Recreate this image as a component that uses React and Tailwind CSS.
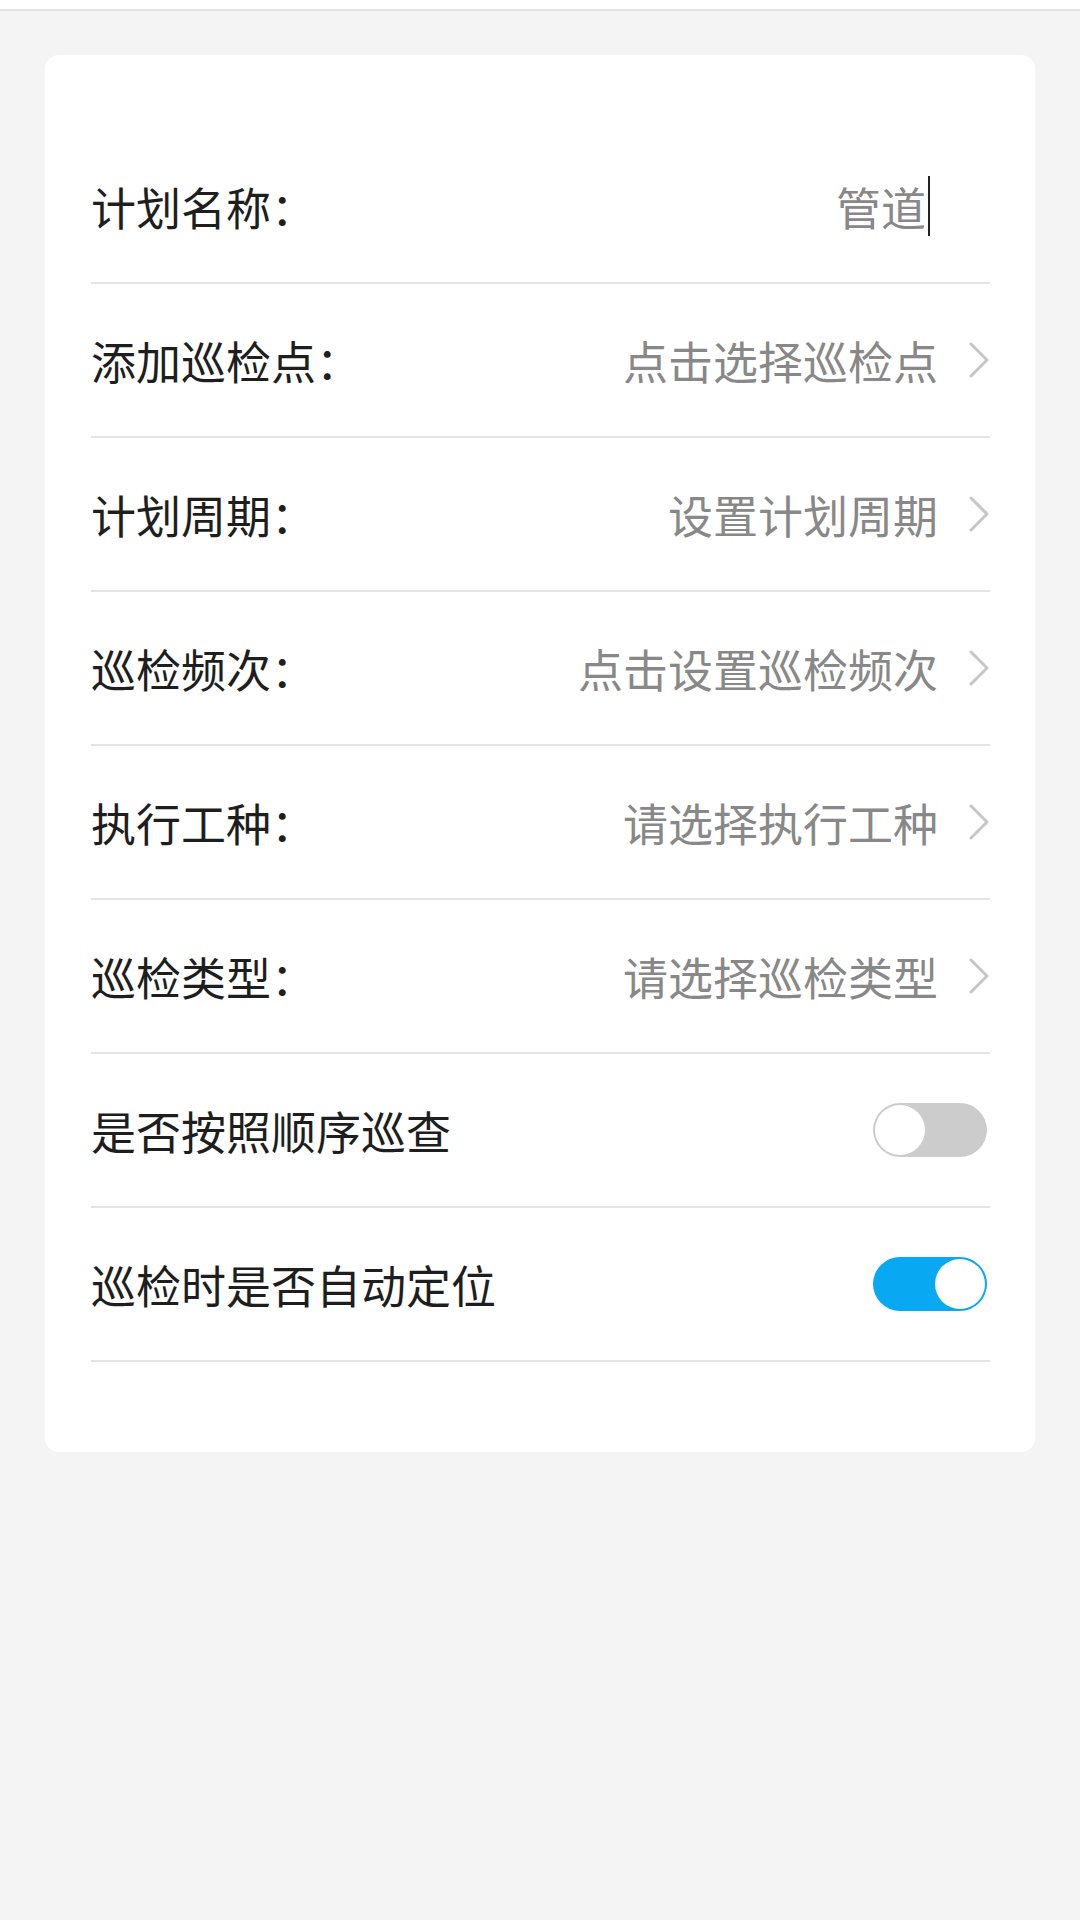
import React from "react";

const font = { fontFamily: '"Noto Sans CJK SC", "Noto Sans", sans-serif' };

function Chevron() {
  return (
    <svg width="22" height="36" viewBox="0 0 22 36" className="shrink-0">
      <path d="M3 2 L19 18 L3 34" fill="none" stroke="#c6c6c6" strokeWidth="3" strokeLinecap="round" strokeLinejoin="round" />
    </svg>
  );
}

function Divider() {
  return <div className="h-[2px] bg-[#e4e4e4]" />;
}

function SelectRow({ label, value }) {
  return (
    <>
      <div className="h-[152px] flex items-center justify-between">
        <span className="text-[45px] leading-none text-[#1e1e1e]">{label}：</span>
        <div className="flex items-center gap-[30px]">
          <span className="text-[45px] leading-none text-[#888888]">{value}</span>
          <Chevron />
        </div>
      </div>
      <Divider />
    </>
  );
}

function Toggle({ on }) {
  return on ? (
    <div className="w-[114px] h-[54px] rounded-full bg-[#08a8f2] flex items-center justify-end p-[2px] mr-[3px]">
      <div className="w-[50px] h-[50px] rounded-full bg-white" />
    </div>
  ) : (
    <div className="w-[114px] h-[54px] rounded-full bg-[#cccccc] flex items-center justify-start p-[2px] mr-[3px]">
      <div className="w-[50px] h-[50px] rounded-full bg-white" />
    </div>
  );
}

function ToggleRow({ label, on }) {
  return (
    <>
      <div className="h-[152px] flex items-center justify-between">
        <span className="text-[45px] leading-none text-[#1e1e1e]">{label}</span>
        <Toggle on={on} />
      </div>
      <Divider />
    </>
  );
}

export default function App() {
  return (
    <div className="w-[1080px] h-[1920px] bg-[#f4f4f4]" style={font}>
      <div className="h-[11px] bg-white border-b-[2px] border-[#e4e4e4]" />
      <div className="mx-[45px] mt-[44px] bg-white rounded-[14px] pt-[75px] pb-[90px] pl-[46px] pr-[45px]">
        <div className="h-[152px] flex items-center justify-between">
          <span className="text-[45px] leading-none text-[#1e1e1e]">计划名称：</span>
          <div className="flex items-center mr-[60px]">
            <span className="text-[45px] leading-none text-[#888888]">管道</span>
            <div className="w-[2px] h-[60px] bg-[#222222] ml-[2px]" />
          </div>
        </div>
        <Divider />
        <SelectRow label="添加巡检点" value="点击选择巡检点" />
        <SelectRow label="计划周期" value="设置计划周期" />
        <SelectRow label="巡检频次" value="点击设置巡检频次" />
        <SelectRow label="执行工种" value="请选择执行工种" />
        <SelectRow label="巡检类型" value="请选择巡检类型" />
        <ToggleRow label="是否按照顺序巡查" on={false} />
        <ToggleRow label="巡检时是否自动定位" on={true} />
      </div>
    </div>
  );
}
